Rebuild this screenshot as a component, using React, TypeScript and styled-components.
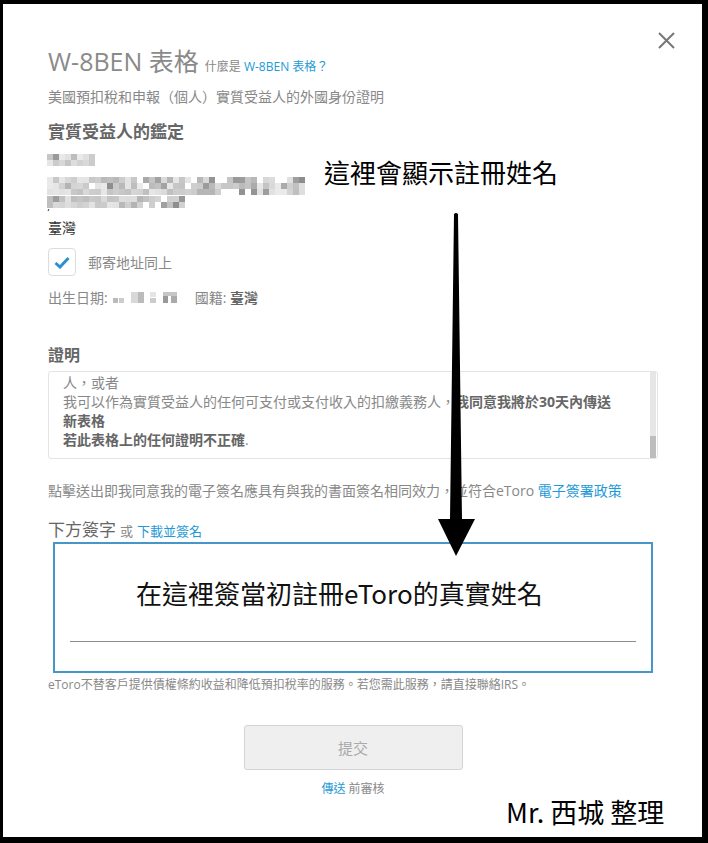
import React from 'react';
import styled, { createGlobalStyle } from 'styled-components';

const GlobalStyle = createGlobalStyle`
  html, body {
    margin: 0;
    padding: 0;
    background: #000;
  }
  * { box-sizing: border-box; }
`;

const UI_FONT = `"Open Sans", "Noto Sans CJK TC", sans-serif`;
const NOTE_FONT = `"Noto Sans CJK TC", sans-serif`;
const BLUE = '#1e9ad6';

const Page = styled.div`
  width: 708px;
  height: 843px;
  padding: 4px 6px 6px 3px;
  background: #000;
`;

const Modal = styled.div`
  position: relative;
  height: 100%;
  background: #fff;
  padding: 42px 44px 0 45px;
  font-family: ${UI_FONT};
  color: #888;
  display: flex;
  flex-direction: column;
`;

const CloseButton = styled.button`
  position: absolute;
  top: 28px;
  left: 655px;
  width: 17px;
  height: 17px;
  padding: 0;
  border: none;
  background: none;
`;

const TitleRow = styled.div`
  display: flex;
  align-items: baseline;
  gap: 6px;
  height: 30px;
`;

const Title = styled.h1`
  margin: 0;
  font-size: 25px;
  line-height: 30px;
  font-weight: 400;
  color: #8a8a8a;
`;

const TitleHelp = styled.span`
  font-size: 12px;
  color: #888;
`;

const Link = styled.a`
  color: ${BLUE};
  text-decoration: none;
`;

const Text = styled.div<{ $top: number; $size?: number; $lh?: number; $color?: string; $bold?: boolean }>`
  margin-top: ${p => p.$top}px;
  font-size: ${p => p.$size ?? 14}px;
  line-height: ${p => p.$lh ?? 20}px;
  color: ${p => p.$color ?? '#888'};
  font-weight: ${p => (p.$bold ? 700 : 400)};
  white-space: nowrap;
`;

const Strong = styled.span<{ $color?: string }>`
  font-weight: 700;
  color: ${p => p.$color ?? '#666'};
`;

const Mosaic = styled.svg`
  display: block;
  margin-top: 10px;
  margin-left: -1px;
`;

const CheckRow = styled.label`
  margin-top: 10px;
  display: flex;
  align-items: center;
  gap: 12px;
  height: 28px;
  font-size: 14px;
  color: #888;
`;

const CheckBox = styled.span`
  width: 28px;
  height: 28px;
  border: 1px solid #dcdcdc;
  border-radius: 4px;
  display: flex;
  align-items: center;
  justify-content: center;
`;

const BirthRow = styled.div`
  margin-top: 12px;
  display: flex;
  align-items: center;
  font-size: 14px;
  line-height: 20px;
  color: #888;
`;

const InlineMosaic = styled.svg`
  display: block;
  margin: 0 16px 0 5px;
`;

const Statement = styled.div`
  margin-top: 5px;
  position: relative;
  height: 88px;
  border: 1px solid #e4e4e4;
  border-radius: 3px;
  padding: 1px 24px 0 14px;
  font-size: 14px;
  line-height: 19px;
  color: #888;
  overflow: hidden;
`;

const ScrollTrack = styled.div`
  position: absolute;
  top: 0;
  right: 1px;
  width: 6px;
  height: 100%;
  background: #e6e6e6;
  display: flex;
  flex-direction: column;
  justify-content: flex-end;
`;

const ScrollThumb = styled.div`
  height: 22px;
  background: #bdbdbd;
`;

const SignLabel = styled.div`
  margin-top: 18px;
  display: flex;
  align-items: baseline;
  gap: 4px;
  line-height: 22px;
  font-size: 13px;
  color: #888;
`;

const SignHeading = styled.span`
  font-size: 17px;
  color: #666;
`;

const SignBox = styled.div`
  margin: 0 5px;
  height: 131px;
  border: 2px solid #4596c9;
  padding: 0 15px;
  display: flex;
  flex-direction: column;
`;

const SignHint = styled.div`
  margin: 32px 0 0 66px;
  font-family: ${NOTE_FONT};
  font-size: 26px;
  line-height: 34px;
  font-weight: 400;
  color: #111;
`;

const SignLine = styled.div`
  margin-top: 31px;
  width: 100%;
  height: 1px;
  background: #8c8c8c;
`;

const SubmitButton = styled.button`
  margin: 32px auto 0;
  width: 219px;
  height: 45px;
  background: #efefef;
  border: 1px solid #d4d4d4;
  border-radius: 3px;
  font-family: ${UI_FONT};
  font-size: 15px;
  color: #aaa;
`;

const Review = styled.div`
  margin-top: 11px;
  text-align: center;
  font-size: 12px;
  line-height: 16px;
  color: #888;
`;

const Note = styled.div<{ $top: number; $left: number; $size?: number }>`
  position: absolute;
  top: ${p => p.$top}px;
  left: ${p => p.$left}px;
  font-family: ${NOTE_FONT};
  font-size: ${p => p.$size ?? 26}px;
  line-height: 32px;
  font-weight: 400;
  color: #000;
  white-space: nowrap;
`;

const Arrow = styled.svg`
  position: absolute;
  top: 206px;
  left: 427px;
`;

// deterministic pseudo random so the redaction looks the same every run
const rand = (seed: number) => {
  const x = Math.sin(seed * 12.9898) * 43758.5453;
  return x - Math.floor(x);
};

const cellFill = (seed: number) => {
  const r = rand(seed);
  const v = r < 0.15 ? 140 + Math.floor(r * 250) : 180 + Math.floor(rand(seed + 7) * 55);
  return `rgb(${v},${v},${v})`;
};

const MosaicRows: { y: number; rows: number; cells: number }[] = [
  { y: 1, rows: 2, cells: 8 },
  { y: 24, rows: 3, cells: 43 },
  { y: 43, rows: 2, cells: 23 },
];

const AddressMosaic = () => (
  <Mosaic width="262" height="60" viewBox="0 0 262 60">
    {MosaicRows.flatMap((row, ri) =>
      Array.from({ length: row.rows * row.cells }, (_, i) => {
        const cx = i % row.cells;
        const cy = Math.floor(i / row.cells);
        const seed = ri * 500 + i + 1;
        if (rand(seed + 3) < 0.1) return null;
        return (
          <rect
            key={`${ri}-${i}`}
            x={cx * 6}
            y={row.y + cy * 6}
            width="6"
            height="6"
            fill={cellFill(seed)}
          />
        );
      })
    )}
    <path d="M1 58 l1 -2" stroke="#333" strokeWidth="1" />
  </Mosaic>
);

const BirthMosaic = () => (
  <InlineMosaic width="66" height="12" viewBox="0 0 66 12">
    <rect x="0" y="6" width="5" height="5" fill="#bbb" />
    <rect x="6" y="6" width="5" height="5" fill="#ccc" />
    <rect x="18" y="0" width="7" height="11" fill="#d8d8d8" />
    <rect x="25" y="0" width="6" height="11" fill="#bbb" />
    <rect x="37" y="0" width="6" height="5" fill="#e4e4e4" />
    <rect x="37" y="6" width="6" height="5" fill="#ccc" />
    <rect x="50" y="0" width="14" height="4" fill="#c6c6c6" />
    <rect x="50" y="4" width="5" height="7" fill="#999" />
    <rect x="58" y="4" width="6" height="7" fill="#aaa" />
  </InlineMosaic>
);

export default function App() {
  return (
    <>
      <GlobalStyle />
      <Page>
        <Modal>
          <CloseButton aria-label="close">
            <svg width="17" height="17" viewBox="0 0 17 17">
              <path d="M1 1 L16 16 M16 1 L1 16" stroke="#777" strokeWidth="2" />
            </svg>
          </CloseButton>

          <TitleRow>
            <Title>W-8BEN 表格</Title>
            <TitleHelp>
              什麼是 <Link href="#">W-8BEN 表格？</Link>
            </TitleHelp>
          </TitleRow>

          <Text $top={11}>美國預扣稅和申報（個人）實質受益人的外國身份證明</Text>
          <Text $top={14} $size={17} $lh={22} $color="#666" $bold>
            實質受益人的鑑定
          </Text>

          <AddressMosaic />

          <Text $top={5} $color="#333">臺灣</Text>

          <CheckRow>
            <CheckBox>
              <svg width="16" height="13" viewBox="0 0 16 13">
                <path d="M1.5 7 L6 11 L14.5 2" fill="none" stroke="#2b8fd6" strokeWidth="3" />
              </svg>
            </CheckBox>
            郵寄地址同上
          </CheckRow>

          <BirthRow>
            <span>出生日期:</span>
            <BirthMosaic />
            <span>
              國籍: <Strong>臺灣</Strong>
            </span>
          </BirthRow>

          <Text $top={36} $size={16} $lh={22} $color="#666" $bold>
            證明
          </Text>

          <Statement>
            <div>人，或者</div>
            <div>
              我可以作為實質受益人的任何可支付或支付收入的扣繳義務人，<Strong>我同意我將於30天內傳送</Strong>
            </div>
            <div>
              <Strong>新表格</Strong>
            </div>
            <div>
              <Strong>若此表格上的任何證明不正確</Strong>.
            </div>
            <ScrollTrack>
              <ScrollThumb />
            </ScrollTrack>
          </Statement>

          <Text $top={22}>
            點擊送出即我同意我的電子簽名應具有與我的書面簽名相同效力，並符合eToro <Link href="#">電子簽署政策</Link>
          </Text>

          <SignLabel>
            <SignHeading>下方簽字</SignHeading>或<Link href="#">下載並簽名</Link>
          </SignLabel>

          <SignBox>
            <SignHint>在這裡簽當初註冊eToro的真實姓名</SignHint>
            <SignLine />
          </SignBox>

          <Text $top={4} $size={12} $lh={16}>
            eToro不替客戶提供債權條約收益和降低預扣稅率的服務。若您需此服務，請直接聯絡IRS。
          </Text>

          <SubmitButton>提交</SubmitButton>

          <Review>
            <Link href="#">傳送</Link> 前審核
          </Review>

          <Note $top={152} $left={321}>這裡會顯示註冊姓名</Note>
          <Note $top={792} $left={503} $size={27}>Mr. 西城 整理</Note>

          <Arrow width="50" height="350" viewBox="0 0 50 350">
            <polygon points="24,4 28,4 32,309 45,309 26,346 8,309 20,309" fill="#000" />
            <circle cx="26" cy="5" r="2" fill="#000" />
          </Arrow>
        </Modal>
      </Page>
    </>
  );
}
